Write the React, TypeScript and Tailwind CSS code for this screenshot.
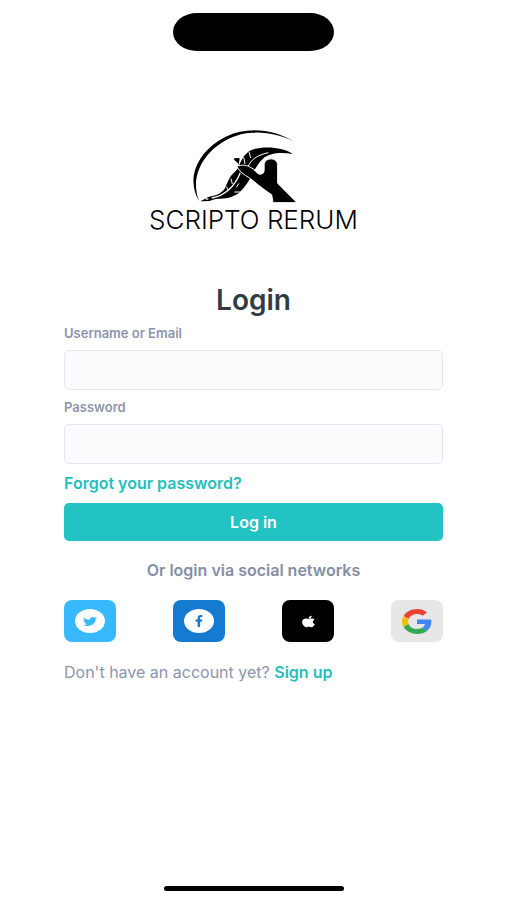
import type { ReactNode } from 'react';
import { FaApple, FaFacebookF, FaTwitter } from 'react-icons/fa';

/* Quill held by a hand, under a thin crescent */
function LogoMark() {
  return (
    <svg viewBox="15 24 381 228" className="h-[76px] w-[127px]" aria-hidden="true">
      <path d="M328 65C270 29 190 17 122 50C42 90 -1 172 43 244C14 176 50 100 124 60C190 25 266 35 328 65Z" />
      {/* feather */}
      <path d="M323 102C296 80 226 76 195 92C174 104 166 128 158 146C148 158 138 164 132 178C124 192 122 208 112 214C102 224 88 228 70 231L46 244L74 243C82 239 90 237 100 236C124 238 148 230 164 217C180 203 192 182 204 160C212 144 220 128 234 116C252 100 284 95 323 102Z" />
      <path d="M148 114C154 117 160 112 164 116L161 134C157 124 144 122 148 114Z" />
      {/* hand */}
      <path
        d="M155 139C172 133 186 135 200 144C216 152 224 167 234 160C240 155 236 140 238 130C242 112 276 111 278 134L278 190L336 248L264 248L260 224C232 206 212 188 194 174C176 164 164 155 155 139Z"
        stroke="#fff"
        strokeWidth="3"
      />
      <path d="M206 149C218 152 226 147 234 141C238 152 234 164 224 164C217 163 212 156 206 149Z" fill="#fff" />
      {/* shaft and barbs */}
      <g fill="none" stroke="#fff">
        <path d="M80 234C112 228 146 206 166 158" strokeWidth="4" />
        <path d="M190 138C198 120 214 106 250 98" strokeWidth="3" />
        <path d="M192 96L197 114M176 112L180 132M138 176L142 192M124 200L130 211M162 190L154 202M148 216L166 216" strokeWidth="3" />
      </g>
      <ellipse cx="66" cy="237" rx="5" ry="2" fill="#fff" />
    </svg>
  );
}

function GoogleIcon() {
  return (
    <svg viewBox="0 0 48 48" preserveAspectRatio="none" className="h-[25px] w-[30px]" aria-hidden="true">
      <path
        fill="#ea4335"
        d="M24 9.5c3.54 0 6.71 1.22 9.21 3.6l6.85-6.85C35.9 2.38 30.47 0 24 0 14.62 0 6.51 5.38 2.56 13.22l7.98 6.19C12.43 13.72 17.74 9.5 24 9.5z"
      />
      <path
        fill="#4285f4"
        d="M46.98 24.55c0-1.57-.15-3.09-.38-4.55H24v9.02h12.94c-.58 2.96-2.26 5.48-4.78 7.18l7.73 6c4.51-4.18 7.09-10.36 7.09-17.65z"
      />
      <path
        fill="#fbbc05"
        d="M10.53 28.59c-.48-1.45-.76-2.99-.76-4.59s.27-3.14.76-4.59l-7.98-6.19C.92 16.46 0 20.12 0 24c0 3.88.92 7.54 2.56 10.78l7.97-6.19z"
      />
      <path
        fill="#34a853"
        d="M24 48c6.48 0 11.93-2.13 15.89-5.81l-7.73-6c-2.15 1.45-4.92 2.3-8.16 2.3-6.26 0-11.57-4.22-13.47-9.91l-7.98 6.19C6.51 42.62 14.62 48 24 48z"
      />
    </svg>
  );
}

function Field({ id, label, type }: { id: string; label: string; type: string }) {
  return (
    <div>
      <label htmlFor={id} className="block text-[13px] leading-4 font-semibold text-[#8c95ad]">
        {label}
      </label>
      <input
        id={id}
        type={type}
        className="mt-[9px] block h-10 w-full rounded-[5px] border border-[#e4e8eb] bg-[#f9fbfd] px-3 text-base text-[#313c42] outline-none focus:border-[#23c3c3]"
      />
    </div>
  );
}

const SOCIALS: { name: string; box: string; icon: ReactNode }[] = [
  {
    name: 'Twitter',
    box: 'bg-[#38b8ff]',
    icon: (
      <span className="flex h-6 w-[30px] items-center justify-center rounded-[50%] bg-white">
        <FaTwitter preserveAspectRatio="none" className="h-[11px] w-3.5 text-[#38b8ff]" />
      </span>
    ),
  },
  {
    name: 'Facebook',
    box: 'bg-[#147bd1]',
    icon: (
      <span className="flex h-6 w-[30px] items-center justify-center rounded-[50%] bg-white">
        <FaFacebookF preserveAspectRatio="none" className="h-3 w-2 text-[#147bd1]" />
      </span>
    ),
  },
  {
    name: 'Apple',
    box: 'bg-black',
    icon: <FaApple preserveAspectRatio="none" className="h-[13px] w-[13px] text-white" />,
  },
  {
    name: 'Google',
    box: 'bg-[#e7e7e7]',
    icon: <GoogleIcon />,
  },
];

export default function App() {
  return (
    <div className="flex min-h-screen flex-col bg-white font-['Inter',sans-serif]">
      <div className="mx-auto mt-[13px] h-[38px] w-[161px] rounded-[24px/19px] bg-black" />

      <main className="flex flex-1 flex-col px-16 pt-[77px]">
        <div className="flex flex-col items-center text-black">
          <LogoMark />
          <span className="text-[26px] leading-8 font-light">SCRIPTO RERUM</span>
        </div>

        <h1 className="mt-12 text-center text-[28px] leading-8 font-semibold text-[#313c42]">
          Login
        </h1>

        <form className="mt-[9px] flex flex-col" onSubmit={(e) => e.preventDefault()}>
          <div className="flex flex-col gap-[9px]">
            <Field id="username" label="Username or Email" type="text" />
            <Field id="password" label="Password" type="password" />
          </div>
          <a href="#forgot" className="mt-[7px] self-start text-base leading-6 font-semibold text-[#23bfbd]">
            Forgot your password?
          </a>
          <button
            type="submit"
            className="mt-2 h-[38px] w-full rounded-[5px] bg-[#23c3c3] text-base font-semibold text-white"
          >
            Log in
          </button>
        </form>

        <p className="mt-[17px] text-center text-base leading-6 font-semibold text-[#858ea5]">
          Or login via social networks
        </p>

        <div className="mt-[18px] flex justify-between">
          {SOCIALS.map((s) => (
            <button
              key={s.name}
              type="button"
              aria-label={s.name}
              className={`flex h-[42px] w-[52px] items-center justify-center rounded-lg ${s.box}`}
            >
              {s.icon}
            </button>
          ))}
        </div>

        <p className="mt-[18px] text-base leading-6 text-[#8c95ad]">
          Don't have an account yet?{' '}
          <a href="#signup" className="font-semibold text-[#23bfbd]">
            Sign up
          </a>
        </p>
      </main>

      <div className="mx-auto mb-[9px] h-[5px] w-[180px] rounded-full bg-black" />
    </div>
  );
}
